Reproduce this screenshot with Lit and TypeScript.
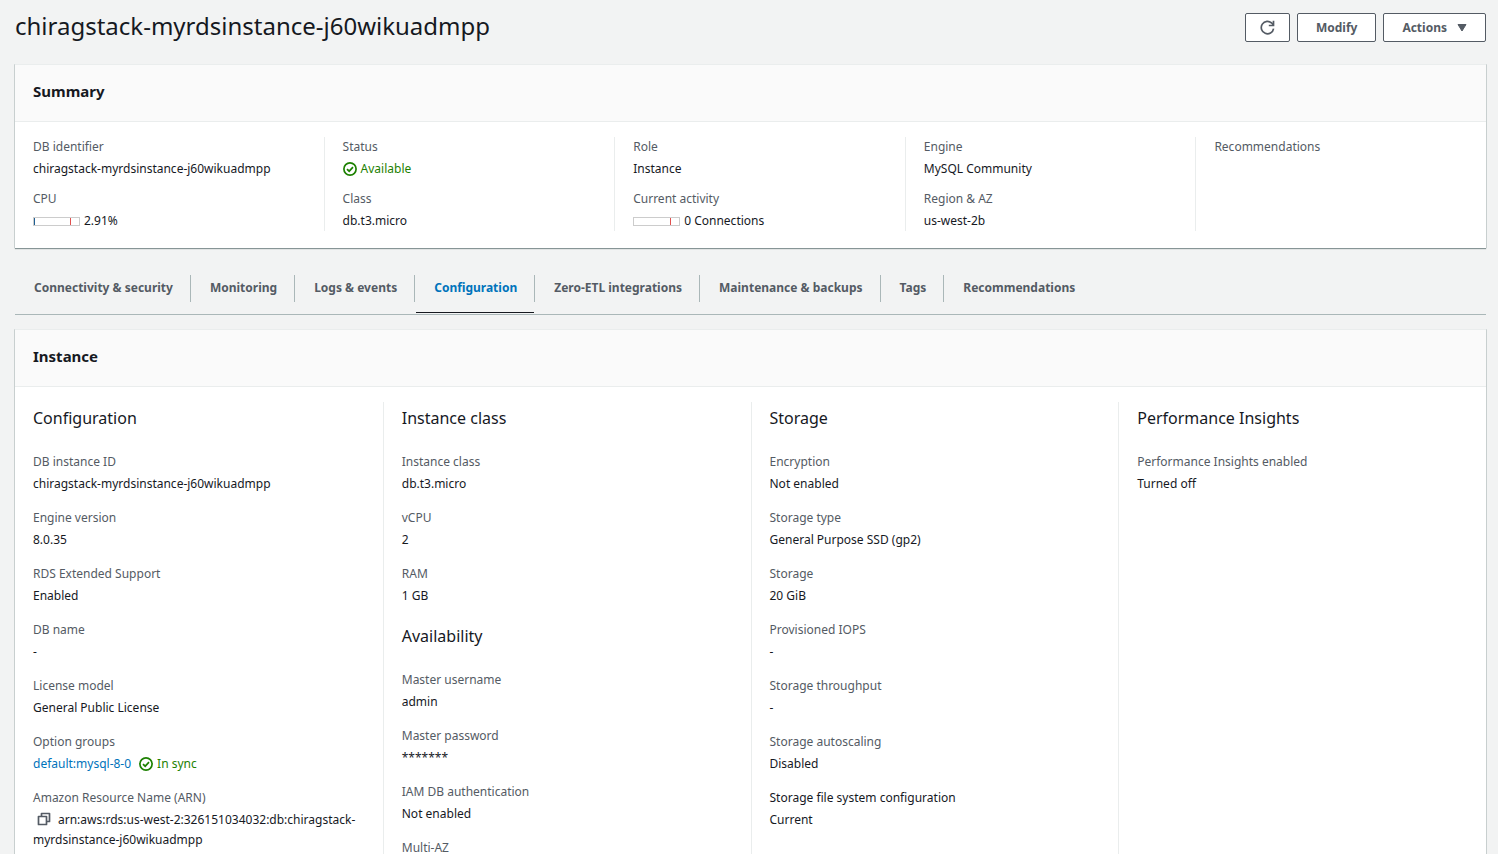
import { LitElement, html, css, svg, nothing, type TemplateResult } from "lit";
import { customElement, state } from "lit/decorators.js";
import { classMap } from "lit/directives/class-map.js";

type Field = { label: string; value?: unknown; plain?: boolean };
type Section = { title: string; fields: Field[] };

const refreshIcon = svg`<svg class="icon" viewBox="0 0 15 15" width="15" height="15" aria-hidden="true">
  <path d="M13.6 8.6a6.2 6.2 0 1 1-1.7-5.4L13.4 5" fill="none" stroke="currentColor" stroke-width="1.7"/>
  <path d="M13.5 .8v4.7H8.8" fill="none" stroke="currentColor" stroke-width="1.7"/>
</svg>`;

const caretIcon = svg`<svg class="caret" viewBox="0 0 10 8" width="10" height="8" aria-hidden="true">
  <path d="M1 .5h8L5 7z" fill="currentColor" stroke="currentColor" stroke-linejoin="round"/>
</svg>`;

const checkIcon = svg`<svg class="icon" viewBox="0 0 14 14" width="14" height="14" aria-hidden="true">
  <circle cx="7" cy="7" r="6.1" fill="none" stroke="currentColor" stroke-width="1.7"/>
  <path d="M4 7.1l2.2 2.1L10 5.2" fill="none" stroke="currentColor" stroke-width="1.7"/>
</svg>`;

const copyIcon = svg`<svg class="icon" viewBox="0 0 14 14" width="14" height="14" aria-hidden="true">
  <path d="M1.5 4.5h8v8h-8z" fill="none" stroke="currentColor" stroke-width="1.7" stroke-linejoin="round"/>
  <path d="M4.5 4.5v-3h8v8h-3" fill="none" stroke="currentColor" stroke-width="1.7" stroke-linejoin="round"/>
</svg>`;

const ok = (text: string) => html`<span class="ok">${checkIcon}${text}</span>`;

const gauge = (percent: number, text: string) => html`<span class="gauge">
  <span class="track">${percent > 0 ? html`<span class="fill" style="width:${percent}%"></span>` : nothing}<span class="limit"></span></span>
  <span>${text}</span>
</span>`;

const summary: Field[][] = [
  [
    { label: "DB identifier", value: "chiragstack-myrdsinstance-j60wikuadmpp" },
    { label: "CPU", value: gauge(2.91, "2.91%") },
  ],
  [
    { label: "Status", value: ok("Available") },
    { label: "Class", value: "db.t3.micro" },
  ],
  [
    { label: "Role", value: "Instance" },
    { label: "Current activity", value: gauge(0, "0 Connections") },
  ],
  [
    { label: "Engine", value: "MySQL Community" },
    { label: "Region & AZ", value: "us-west-2b" },
  ],
  [{ label: "Recommendations" }],
];

const instance: Section[][] = [
  [
    {
      title: "Configuration",
      fields: [
        { label: "DB instance ID", value: "chiragstack-myrdsinstance-j60wikuadmpp" },
        { label: "Engine version", value: "8.0.35" },
        { label: "RDS Extended Support", value: "Enabled" },
        { label: "DB name", value: "-" },
        { label: "License model", value: "General Public License" },
        { label: "Option groups", value: html`<span class="pair"><a href="#option-group">default:mysql-8-0</a>${ok("In sync")}</span>` },
        {
          label: "Amazon Resource Name (ARN)",
          value: html`<button class="copy" type="button" aria-label="Copy ARN">${copyIcon}</button>arn:aws:rds:us-west-2:326151034032:db:chiragstack-myrdsinstance-j60wikuadmpp`,
        },
      ],
    },
  ],
  [
    {
      title: "Instance class",
      fields: [
        { label: "Instance class", value: "db.t3.micro" },
        { label: "vCPU", value: "2" },
        { label: "RAM", value: "1 GB" },
      ],
    },
    {
      title: "Availability",
      fields: [
        { label: "Master username", value: "admin" },
        { label: "Master password", value: "*******" },
        { label: "IAM DB authentication", value: "Not enabled" },
        { label: "Multi-AZ" },
      ],
    },
  ],
  [
    {
      title: "Storage",
      fields: [
        { label: "Encryption", value: "Not enabled" },
        { label: "Storage type", value: "General Purpose SSD (gp2)" },
        { label: "Storage", value: "20 GiB" },
        { label: "Provisioned IOPS", value: "-" },
        { label: "Storage throughput", value: "-" },
        { label: "Storage autoscaling", value: "Disabled" },
        { label: "Storage file system configuration", value: "Current", plain: true },
      ],
    },
  ],
  [
    {
      title: "Performance Insights",
      fields: [{ label: "Performance Insights enabled", value: "Turned off" }],
    },
  ],
];

const tabs = [
  "Connectivity & security",
  "Monitoring",
  "Logs & events",
  "Configuration",
  "Zero-ETL integrations",
  "Maintenance & backups",
  "Tags",
  "Recommendations",
];

@customElement("app-root")
class AppRoot extends LitElement {
  @state() private active = "Configuration";

  static styles = css`
    :host {
      display: block;
      box-sizing: border-box;
      height: 100vh;
      overflow-y: auto;
      scrollbar-width: none;
      padding: 0 12px 0 15px;
      background: #f2f3f3;
      color: #16191f;
      font: 12px/20px "Noto Sans", "Open Sans", sans-serif;
    }
    * { box-sizing: border-box; }
    h1, h2, h3, dl, dd { margin: 0; font-weight: 400; }
    button { font: inherit; color: inherit; cursor: pointer; }
    a { color: #0073bb; text-decoration: none; }
    .icon { display: block; flex: none; }

    .top {
      display: flex;
      justify-content: space-between;
      align-items: flex-start;
      padding: 10px 0 22px;
    }
    h1 { font-size: 24px; line-height: 32px; }
    .actions { display: flex; gap: 7px; padding-top: 3px; }
    .btn {
      display: flex;
      align-items: center;
      gap: 8px;
      height: 29px;
      padding: 0 18px;
      border: 1px solid #545b64;
      border-radius: 2px;
      background: #fff;
      color: #545b64;
      font-weight: 700;
    }
    .btn.square { padding: 0 14px; }
    .caret { margin-left: 2px; }

    .panel {
      border-top: 1px solid #eaeded;
      background: #fff;
      box-shadow: 0 1px 1px #879596, 1px 0 0 #d5dbdb, -1px 0 0 #d5dbdb;
    }
    .panel > header {
      padding: 14px 18px 18px;
      border-bottom: 1px solid #eaeded;
      background: #fafafa;
    }
    h2 { font-size: 15px; line-height: 24px; font-weight: 700; }

    .cols { display: grid; padding-top: 15px; }
    .col { padding: 0 18px; min-width: 0; }
    .col + .col { border-left: 1px solid #eaeded; }
    .five { grid-template-columns: repeat(5, minmax(0, 1fr)); margin-left: 18px; padding-bottom: 17px; }
    .five .col:first-child { padding-left: 0; }
    .five dl { display: grid; gap: 10px; }
    .four { grid-template-columns: repeat(4, minmax(0, 1fr)); }
    .four dl { display: grid; gap: 14px; }
    .four section + section { margin-top: 14px; }
    h3 { font-size: 16px; line-height: 32px; margin-bottom: 18px; }

    dt { color: #545b64; }
    dt.plain { color: inherit; }
    dd { margin-top: 2px; overflow-wrap: break-word; }
    .ok { display: flex; align-items: center; gap: 4px; color: #1d8102; }
    .pair { display: flex; gap: 8px; }
    .gauge { display: flex; align-items: center; gap: 4px; }
    .track {
      display: flex;
      width: 47px;
      height: 9px;
      padding-right: 8px;
      border: 1px solid #ccc;
    }
    .fill { background: #1f5f93; }
    .limit { width: 1px; margin-left: auto; background: #e0504f; }
    .copy {
      display: inline-block;
      margin: 0 7px 0 4px;
      padding: 0;
      border: 0;
      background: none;
      color: #545b64;
      vertical-align: -2px;
    }

    .tabs {
      display: flex;
      margin: 18px 0 14px;
      padding: 9px 0 1px;
      border-bottom: 1px solid #aab7b8;
    }
    .tab {
      display: flex;
      flex-direction: column;
      padding: 0;
      border: 0;
      background: none;
      color: #545b64;
      font-weight: 700;
    }
    .tab span {
      padding: 3px 17px 4px 19px;
      border-right: 1px solid #aab7b8;
    }
    .tab:last-child span { border-right-color: transparent; }
    .tab::after {
      content: "";
      height: 1px;
      margin: 10px 1px 0;
      align-self: stretch;
    }
    .tab.active { color: #0073bb; }
    .tab.active::after { background: #16191f; }
  `;

  private list(fields: Field[]): TemplateResult {
    return html`<dl>
      ${fields.map((f) => html`<div>
        <dt class=${classMap({ plain: !!f.plain })}>${f.label}</dt>
        ${f.value === undefined ? nothing : html`<dd>${f.value}</dd>`}
      </div>`)}
    </dl>`;
  }

  render() {
    return html`
      <header class="top">
        <h1>chiragstack-myrdsinstance-j60wikuadmpp</h1>
        <div class="actions">
          <button class="btn square" type="button" aria-label="Refresh">${refreshIcon}</button>
          <button class="btn" type="button">Modify</button>
          <button class="btn" type="button">Actions ${caretIcon}</button>
        </div>
      </header>

      <section class="panel">
        <header><h2>Summary</h2></header>
        <div class="cols five">
          ${summary.map((fields) => html`<div class="col">${this.list(fields)}</div>`)}
        </div>
      </section>

      <div class="tabs" role="tablist">
        ${tabs.map((t) => html`<button
          class=${classMap({ tab: true, active: t === this.active })}
          type="button"
          role="tab"
          aria-selected=${t === this.active}
          @click=${() => (this.active = t)}
        ><span>${t}</span></button>`)}
      </div>

      <section class="panel">
        <header><h2>Instance</h2></header>
        <div class="cols four">
          ${instance.map((sections) => html`<div class="col">
            ${sections.map((s) => html`<section><h3>${s.title}</h3>${this.list(s.fields)}</section>`)}
          </div>`)}
        </div>
      </section>
    `;
  }
}
